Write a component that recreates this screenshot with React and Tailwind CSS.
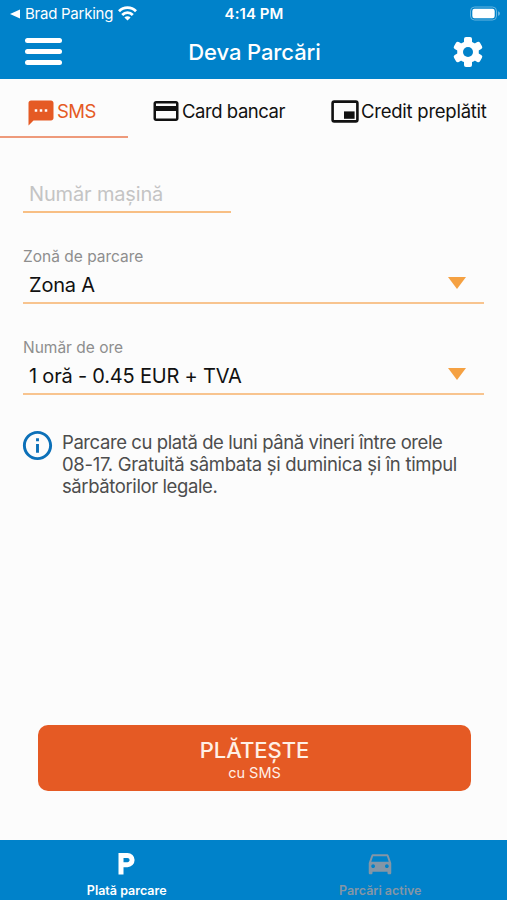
import { useState } from "react"
import { MdSms, MdCreditCard, MdInfoOutline, MdDirectionsCar } from "react-icons/md"

function GearIcon() {
  return (
    <svg width="30" height="30" viewBox="-15 -15 30 30" fill="currentColor">
      {/* three bars make the six teeth */}
      <rect x="-4" y="-15" width="8" height="30" rx="2" />
      <rect x="-4" y="-15" width="8" height="30" rx="2" transform="rotate(60)" />
      <rect x="-4" y="-15" width="8" height="30" rx="2" transform="rotate(120)" />
      <circle r="10.8" />
      <circle r="5" fill="#0082ca" />
    </svg>
  )
}

function CreditIcon() {
  return (
    <svg width="28" height="23" viewBox="0 0 28 23">
      <rect x="1.6" y="1.6" width="24.8" height="19.8" rx="1.6" fill="none" stroke="currentColor" strokeWidth="2.6" />
      <rect x="13" y="11.4" width="10.6" height="7.4" fill="currentColor" />
    </svg>
  )
}

function StatusBar() {
  return (
    <div className="grid grid-cols-3 items-center h-7 pl-[10px] pr-[6px] text-[15px] leading-7">
      <div className="flex items-center whitespace-nowrap">
        <svg width="11" height="10" viewBox="0 0 11 10" fill="currentColor">
          <path d="M0 5 10 0.5v9z" />
        </svg>
        <span className="ml-1 tracking-[-0.25px]">Brad Parking</span>
        <svg className="ml-[5px] -mt-[2px] shrink-0" width="19" height="15" viewBox="0 0 19 15" fill="none" stroke="currentColor" strokeWidth="2.8">
          <path d="M1 5.2a12 12 0 0 1 17 0" />
          <path d="M4.2 8.9a7.5 7.5 0 0 1 10.6 0" />
          <path d="M9.5 14.5 6.4 11.5a4.4 4.4 0 0 1 6.2 0z" fill="currentColor" stroke="none" />
        </svg>
      </div>
      <span className="-ml-[3px] text-center font-semibold tracking-[0.05px]">4:14 PM</span>
      <svg className="justify-self-end -mt-[2px]" width="31" height="15" viewBox="0 0 31 15">
        <rect x="0.5" y="1" width="26" height="13" rx="4" fill="none" stroke="#64b4df" />
        <rect x="2.3" y="2.8" width="22.4" height="9.4" rx="2.2" fill="#fff" />
        <path d="M28 5.2c1.5.4 2 1.4 2 2.3s-.5 1.9-2 2.3z" fill="#64b4df" />
      </svg>
    </div>
  )
}

function Header() {
  return (
    <header className="h-[79px] bg-[#0082ca] text-white">
      <StatusBar />
      <div className="flex items-center justify-between h-[47px] pl-[25px] pr-[24px]">
        <button className="flex flex-col gap-[6px]" title="Menu">
          <span className="w-[37px] h-[5px] rounded-full bg-white" />
          <span className="w-[37px] h-[5px] rounded-full bg-white" />
          <span className="w-[37px] h-[5px] rounded-full bg-white" />
        </button>
        <h1 className="-ml-[6px] text-[22px] leading-7 font-medium tracking-[-0.1px]">Deva Parcări</h1>
        <button title="Settings">
          <GearIcon />
        </button>
      </div>
    </header>
  )
}

function SelectField({ label, value }) {
  return (
    <div className="h-[91px]">
      <p className="pt-px text-[15.5px] leading-5 text-[#8e8e8e]">{label}</p>
      <div className="flex items-center justify-between h-[37px] pl-[6px] pr-[18px] border-b-2 border-[#f8c48f]">
        <span className="text-[20px] leading-7 tracking-[-0.2px] text-[#111]">{value}</span>
        <svg className="-mt-[3px]" width="18" height="12" viewBox="0 0 18 12" fill="#f5a142">
          <path d="M0 0h18L9 12z" />
        </svg>
      </div>
    </div>
  )
}

function App() {
  const [tab, setTab] = useState("sms")

  return (
    <div className="flex flex-col w-[507px] h-[900px] overflow-hidden bg-[#fcfcfc] font-['Inter',sans-serif]">
      <Header />

      <nav className="flex h-[59px] text-[18.5px] leading-6 text-[#111]">
        <button
          onClick={() => setTab("sms")}
          className={`flex items-center w-[128px] pl-[26px] pt-[7px] ${
            tab === "sms" ? "border-b-2 border-[#ee9a7b] text-[#e55a24]" : ""
          }`}
        >
          <MdSms size={30} className="mt-[3px]" />
          <span className="ml-[1px] tracking-[-0.5px]">SMS</span>
        </button>
        <button onClick={() => setTab("card")} className="flex items-center pl-[23px] pt-[5px] whitespace-nowrap">
          <MdCreditCard size={30} />
          <span className="ml-[1px] tracking-[-0.45px]">Card bancar</span>
        </button>
        <button onClick={() => setTab("credit")} className="flex items-center pl-[46px] pt-[5px] whitespace-nowrap">
          <CreditIcon />
          <span className="ml-[2px] tracking-[-0.25px]">Credit preplătit</span>
        </button>
      </nav>

      <main className="flex flex-col flex-1 px-[23px] pt-[37px]">
        <input
          placeholder="Număr mașină"
          className="w-[208px] h-[38px] pt-px pl-[6px] text-[20px] tracking-[-0.15px] border-b-2 border-[#f8bf84] placeholder:text-[#c4c4c4] outline-none"
        />
        <div className="mt-[33px]">
          <SelectField label="Zonă de parcare" value="Zona A" />
          <SelectField label="Număr de ore" value="1 oră - 0.45 EUR + TVA" />
        </div>
        <div className="flex mt-[3px]">
          <MdInfoOutline size={35} className="-ml-[3px] -mt-[3px] shrink-0 text-[#0c70b8]" />
          <p className="ml-[7px] text-[18.5px] leading-[22px] whitespace-nowrap text-[#4d4d4d]">
            <span className="block tracking-[-0.42px]">Parcare cu plată de luni până vineri între orele</span>
            <span className="block tracking-[-0.31px]">08-17. Gratuită sâmbata și duminica și în timpul</span>
            <span className="block tracking-[-0.4px]">sărbătorilor legale.</span>
          </p>
        </div>
        <button className="flex flex-col items-center justify-center w-[433px] h-[66px] mt-auto mb-[49px] ml-[15px] pt-[4px] rounded-[10px] bg-[#e55a24] text-[#fff0e6]">
          <span className="text-[22px] leading-6 font-medium">PLĂTEȘTE</span>
          <span className="text-[14.5px] leading-[21px]">cu SMS</span>
        </button>
      </main>

      <footer className="grid grid-cols-2 h-[60px] bg-[#0082ca] text-[12.5px] leading-4 font-semibold">
        <button className="flex flex-col items-center justify-start pt-[12px] text-white">
          <svg width="17" height="23" viewBox="0 0 17 23" fill="none" stroke="currentColor" strokeWidth="5">
            <path d="M3 22.5V3.5h6.5a4.6 4.6 0 0 1 0 9.2H3" />
          </svg>
          <span className="mt-[8px]">Plată parcare</span>
        </button>
        <button className="flex flex-col items-center justify-start pt-[8px] text-[#8496a6]">
          <MdDirectionsCar size={30} />
          <span className="mt-[5px]">Parcări active</span>
        </button>
      </footer>
    </div>
  )
}

export default App
